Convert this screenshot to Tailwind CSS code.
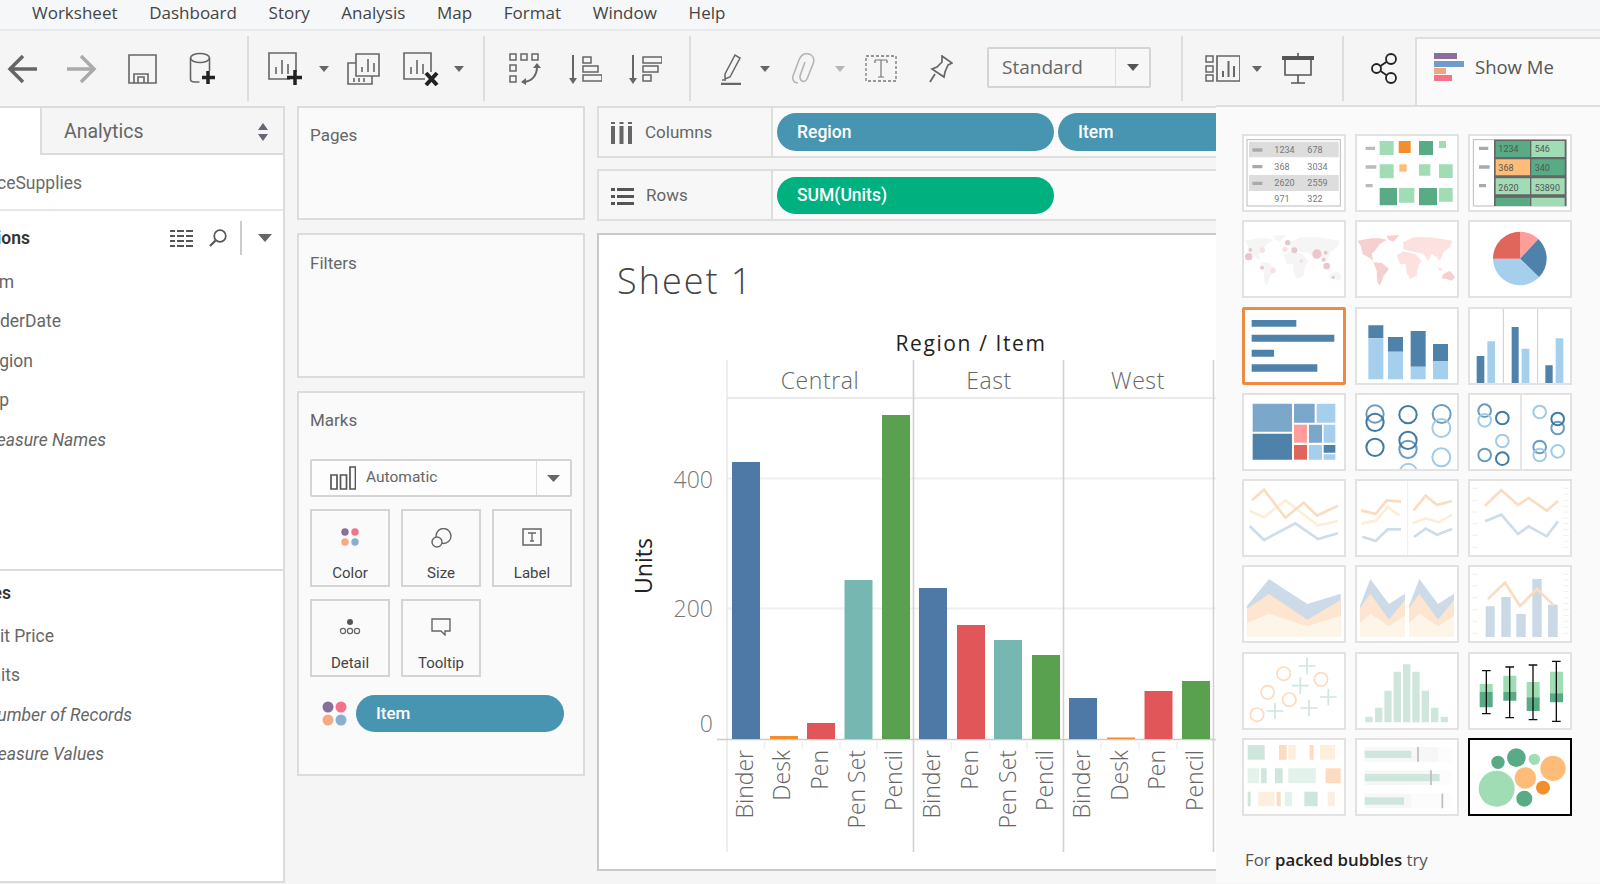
<!DOCTYPE html>
<html lang="en">
<head>
  <meta charset="UTF-8">
  <title>Tableau - Sheet 1</title>
  <script src="https://cdn.jsdelivr.net/npm/@tailwindcss/browser@4"></script>
</head>
<body class="h-[884px] w-[1600px] overflow-hidden bg-[#f5f5f5] font-['Roboto',sans-serif] text-[#555]">

  <!-- menu bar -->
  <div class="h-[31px] flex items-center pl-[32px] pb-[4px] gap-[31.700px] bg-[#f6f7f8] border-b-2 border-[#e8e9ea] font-['Open_Sans',sans-serif] text-[17px] text-[#444]">
    <span>Worksheet</span><span>Dashboard</span><span>Story</span><span>Analysis</span><span>Map</span><span>Format</span><span>Window</span><span>Help</span>
  </div>

  <!-- toolbar -->
  <div class="h-[75px] flex items-center bg-[#f5f5f5]">
    <svg class="ml-[7px]" width="31" height="30" viewBox="0 0 31 30" fill="none" stroke="#666" stroke-width="3.5"><path d="M30 15H4M16 2 3 15l13 13"/></svg>
    <svg class="ml-[28px]" width="32" height="30" viewBox="0 0 32 30" fill="none" stroke="#aaa" stroke-width="3.5"><path d="M1 15h26M15 2l13 13-13 13"/></svg>
    <svg class="ml-[30px]" width="29" height="30" viewBox="0 0 29 30" fill="none" stroke="#666" stroke-width="1.6"><path d="M1 1h27v28H1z"/><path d="M6 29V20h14v9M10 29v-6h6v6" /></svg>
    <svg class="ml-[32px]" width="26" height="33" viewBox="0 0 26 33" fill="none" stroke="#666" stroke-width="1.6"><ellipse cx="11" cy="6" rx="9.5" ry="4.5"/><path d="M1.5 6v21c0 2 2 3 4 3h5M20.500 6v13"/><path d="M19 19v13M13 25.500h13" stroke="#222" stroke-width="3.5"/></svg>
    <div class="ml-[32px] w-[2px] h-[65px] bg-[#ddd]"></div>

    <svg class="ml-[19px]" width="34" height="33" viewBox="0 0 34 33" fill="none" stroke="#666" stroke-width="1.6"><path d="M22 27H1V1h27v19"/><path d="M8 22v-7M14 22V8M20 22V12"/><path d="M27 18v15M19 25.500h15" stroke="#222" stroke-width="3.500"/></svg>
    <svg class="ml-[17px]" width="10" height="6" viewBox="0 0 10 6" fill="#666"><path d="M0 0h10L5 6z"/></svg>
    <svg class="ml-[18px]" width="33" height="32" viewBox="0 0 33 32" fill="none" stroke="#666" stroke-width="1.6"><path d="M9 1h23v22H9z"/><path d="M15 19v-5M21 19V6M27 19V10"/><path d="M9 10H1v21h24v-8"/><path d="M7 29v-4M12 29v-4M17 29v-4"/></svg>
    <svg class="ml-[23px]" width="36" height="34" viewBox="0 0 36 34" fill="none" stroke="#666" stroke-width="1.6"><path d="M22 27H1V1h27v19"/><path d="M8 22v-7M14 22V8M20 22V12"/><path d="M23 21l11 12M34 21 23 33" stroke="#222" stroke-width="4"/></svg>
    <svg class="ml-[15px]" width="10" height="6" viewBox="0 0 10 6" fill="#666"><path d="M0 0h10L5 6z"/></svg>
    <div class="ml-[19px] w-[2px] h-[65px] bg-[#ddd]"></div>

    <svg class="ml-[24px]" width="32" height="32" viewBox="0 0 32 32" fill="none" stroke="#666" stroke-width="1.500"><path d="M1 1h6v6H1zM12 1h6v6h-6zM23 1h6v6h-6zM1 12h6v6H1zM1 23h6v6H1z"/><path d="M14 29c8 0 14-6 14-15" stroke-width="2"/><path d="M24 15l4-5 4 5zM17 25l-5 4 5 3z" fill="#666" stroke="none"/></svg>
    <svg class="ml-[28px]" width="33" height="32" viewBox="0 0 33 32" fill="none" stroke="#666" stroke-width="1.500"><path d="M4 2v24" stroke-width="2"/><path d="M0 25h8l-4 6z" fill="#666" stroke="none"/><path d="M14 4h8v6h-8zM14 13h15v6H14zM14 22h19v6H14z"/></svg>
    <svg class="ml-[27px]" width="33" height="32" viewBox="0 0 33 32" fill="none" stroke="#666" stroke-width="1.500"><path d="M4 2v24" stroke-width="2"/><path d="M0 25h8l-4 6z" fill="#666" stroke="none"/><path d="M14 4h19v6H14zM14 13h15v6H14zM14 22h8v6h-8z"/></svg>
    <div class="ml-[27px] w-[2px] h-[65px] bg-[#ddd]"></div>

    <svg class="ml-[30px]" width="20" height="32" viewBox="0 0 20 32" fill="none" stroke="#666" stroke-width="1.500"><path d="M4 21 14 2l5 3L9 24l-5 2z"/><path d="M0 31h20" stroke-width="2.500"/><path d="M1 27h4" stroke-width="1.500"/></svg>
    <svg class="ml-[19px]" width="10" height="6" viewBox="0 0 10 6" fill="#666"><path d="M0 0h10L5 6z"/></svg>
    <svg class="ml-[21px]" width="25" height="32" viewBox="0 0 25 32" fill="none" stroke="#b5b5b5" stroke-width="1.600"><path d="M7 30c-4 0-6-3-5-7l6-16c2-5 6-7 10-6s6 5 4 10l-6 15c-1 2-3 3-5 2s-2-3-2-5l5-14"/></svg>
    <svg class="ml-[19px]" width="10" height="6" viewBox="0 0 10 6" fill="#b5b5b5"><path d="M0 0h10L5 6z"/></svg>
    <svg class="ml-[20px]" width="32" height="27" viewBox="0 0 32 27" fill="none" stroke="#777"><path d="M1 1h30v25H1z" stroke-dasharray="3 2" stroke-width="1.300"/><path d="M10 5h12M16 5v17M13 22h6M10 5v3M22 5v3" stroke-width="1.200"/></svg>
    <svg class="ml-[32px]" width="24" height="28" viewBox="0 0 24 28" fill="none" stroke="#666" stroke-width="1.700"><path d="M13 1l10 7-4 2-3 7-1 5-6-4-6-4 5-2 5-5z"/><path d="M6 19 1 27"/></svg>

    <div class="ml-[34px] mb-[3px] w-[164px] h-[41px] flex items-center border-2 border-[#d4d4d4] rounded-[2px] bg-[#f7f7f7]">
      <span class="flex-1 pl-[13px] text-[19px] font-['Open_Sans',sans-serif] text-[#666]">Standard</span>
      <div class="w-[34px] h-full flex items-center justify-center border-l border-[#ddd]">
        <svg width="12" height="7" viewBox="0 0 12 7" fill="#555"><path d="M0 0h12L6 7z"/></svg>
      </div>
    </div>
    <div class="ml-[30px] w-[2px] h-[65px] bg-[#ddd]"></div>

    <svg class="ml-[22px]" width="35" height="27" viewBox="0 0 35 27" fill="none" stroke="#666" stroke-width="1.500"><path d="M1 1h7v6H1zM1 11h7v6H1zM1 20h7v6H1z"/><path d="M12 1h23v25H12z" stroke-width="1.700"/><path d="M18 22v-6M23.500 22V6M29 22V11" stroke-width="2"/></svg>
    <svg class="ml-[12px]" width="10" height="6" viewBox="0 0 10 6" fill="#666"><path d="M0 0h10L5 6z"/></svg>
    <svg class="ml-[20px]" width="32" height="31" viewBox="0 0 32 31" fill="none" stroke="#555" stroke-width="1.600"><path d="M16 0v4"/><path d="M0 3h32v4H0z" fill="#555" stroke="none"/><path d="M3 7v15h26V7M16 22v8M9 30h14"/></svg>
    <div class="ml-[28px] w-[2px] h-[65px] bg-[#ddd]"></div>

    <svg class="ml-[27px]" width="26" height="31" viewBox="0 0 26 31" fill="none" stroke="#222" stroke-width="1.800"><circle cx="5.500" cy="15.500" r="4.500"/><circle cx="20" cy="6" r="5"/><circle cx="20" cy="25" r="5"/><path d="M9.500 13 16 8.500M9.500 18 16 22.500"/></svg>

    <div class="ml-[18px] flex-1 h-[69px] self-end flex items-center gap-[11px] pl-[17px] pb-[11px] bg-[#fafafa] border-t-2 border-l-2 border-[#dedede]">
      <svg width="30" height="28" viewBox="0 0 30 28"><path fill="#8a6f9c" d="M0 0h23v6H0z"/><path fill="#6f9ccb" d="M0 8h30v6H0z"/><path fill="#f2a679" d="M0 15h12v6H0z"/><path fill="#f4738a" d="M0 22h18v6H0z"/></svg>
      <span class="text-[18.500px] font-['Open_Sans',sans-serif] text-[#555]">Show Me</span>
    </div>
  </div>

  <!-- main -->
  <div class="h-[778px] flex">

    <!-- data pane -->
    <div class="w-[285px] h-[777px] shrink-0 bg-white border-r-2 border-b-2 border-[#dcdcdc] overflow-hidden text-[17.500px] text-[#666]">
      <div class="h-[49px] flex">
        <div class="w-[40px] border-t-2 border-[#dcdcdc]"></div>
        <div class="flex-1 flex items-center justify-between pl-[22px] pt-[2px] pr-[14px] bg-[#f5f5f5] border-2 border-r-0 border-[#dcdcdc] text-[19.500px]">
          <span>Analytics</span>
          <svg width="12" height="18" viewBox="0 0 12 18" fill="#667"><path d="M6 0l5 7H1zM6 18l-5-7h10z"/></svg>
        </div>
      </div>
      <div class="h-[56px] pt-[2px] flex items-center border-b-2 border-[#e6e6e6]">
        <div class="w-[82px] flex justify-end whitespace-nowrap text-[#6b6b6b]">OfficeSupplies</div>
      </div>
      <div class="h-[360px] border-b-2 border-[#dcdcdc] flex flex-col">
        <div class="h-[51px] pt-[3px] flex items-center text-[#333]">
          <div class="w-[30px] flex justify-end whitespace-nowrap font-semibold">Dimensions</div>
          <svg class="ml-[140px]" width="23" height="17" viewBox="0 0 23 17" fill="none" stroke="#555" stroke-width="2"><path d="M0 1h5M7 1h7M16 1h7M0 6h5M7 6h7M16 6h7M0 11h5M7 11h7M16 11h7M0 16h5M7 16h7M16 16h7"/></svg>
          <svg class="ml-[16px]" width="18" height="18" viewBox="0 0 18 18" fill="none" stroke="#555" stroke-width="1.700"><circle cx="11" cy="7" r="5.800"/><path d="M6.500 11.500 1 17" stroke-width="2.200"/></svg>
          <div class="ml-[13px] w-[1.500px] h-[34px] bg-[#ccc]"></div>
          <svg class="ml-[16px]" width="14" height="8" viewBox="0 0 14 8" fill="#666"><path d="M0 0h14L7 8z"/></svg>
        </div>
        <div class="h-[39.500px] flex items-center"><div class="w-[14px] flex justify-end whitespace-nowrap">Item</div></div>
        <div class="h-[39.500px] flex items-center"><div class="w-[61px] flex justify-end whitespace-nowrap">OrderDate</div></div>
        <div class="h-[39.500px] flex items-center"><div class="w-[33px] flex justify-end whitespace-nowrap">Region</div></div>
        <div class="h-[39.500px] flex items-center"><div class="w-[9px] flex justify-end whitespace-nowrap">Rep</div></div>
        <div class="h-[39.500px] flex items-center italic"><div class="w-[106px] flex justify-end whitespace-nowrap">Measure Names</div></div>
      </div>
      <div class="h-[45px] flex items-center text-[#333]">
        <div class="w-[11px] flex justify-end whitespace-nowrap font-semibold">Measures</div>
      </div>
      <div class="h-[39.500px] flex items-center"><div class="w-[54px] flex justify-end whitespace-nowrap">Unit Price</div></div>
      <div class="h-[39.500px] flex items-center"><div class="w-[20px] flex justify-end whitespace-nowrap">Units</div></div>
      <div class="h-[39.500px] flex items-center italic"><div class="w-[132px] flex justify-end whitespace-nowrap">Number of Records</div></div>
      <div class="h-[39.500px] flex items-center italic"><div class="w-[104px] flex justify-end whitespace-nowrap">Measure Values</div></div>
    </div>

    <!-- pages, filters, marks -->
    <div class="ml-[12px] w-[288px] shrink-0 flex flex-col gap-[13px] text-[#666] text-[17px]">
      <div class="h-[114px] px-[11px] pt-[15px] bg-[#fafafa] border-2 border-[#dcdcdc]">Pages</div>
      <div class="h-[145px] px-[11px] pt-[16px] bg-[#fafafa] border-2 border-[#dcdcdc]">Filters</div>
      <div class="h-[385px] px-[11px] pt-[16px] bg-[#fafafa] border-2 border-[#dcdcdc]">
        <div class="leading-[22px]">Marks</div>
        <div class="mt-[28px] w-[262px] h-[38px] flex items-center border-2 border-[#d4d4d4] rounded-[2px] bg-white/60">
          <svg class="ml-[18px]" width="26" height="24" viewBox="0 0 26 24" fill="none" stroke="#555" stroke-width="1.700"><path d="M1 9h6v14H1zM10.500 9h6v14h-6zM20 1h5.500v22H20z"/></svg>
          <span class="ml-[10px] text-[15.500px]">Automatic</span>
          <div class="ml-auto w-[34px] h-full flex items-center justify-center border-l border-[#ddd]">
            <svg width="13" height="7" viewBox="0 0 13 7" fill="#666"><path d="M0 0h13L6.500 7z"/></svg>
          </div>
        </div>
        <div class="mt-[12px] grid grid-cols-[80px_80px_80px] gap-x-[11px] gap-y-[12px] text-[15px] text-[#444]">
          <div class="h-[78px] flex flex-col items-center border-2 border-[#d4d4d4]">
            <svg class="mt-[17px]" width="18" height="18" viewBox="0 0 18 18"><circle cx="4" cy="4" r="3.700" fill="#8a6f9c"/><circle cx="14" cy="4" r="3.700" fill="#f4738a"/><circle cx="4" cy="14" r="3.700" fill="#f4aa82"/><circle cx="14" cy="14" r="3.700" fill="#88aed2"/></svg>
            <span class="mt-[16px]">Color</span>
          </div>
          <div class="h-[78px] flex flex-col items-center border-2 border-[#d4d4d4]">
            <svg class="mt-[17px]" width="21" height="20" viewBox="0 0 21 20" fill="none" stroke="#666" stroke-width="1.400"><circle cx="12.500" cy="8" r="7.500"/><circle cx="6" cy="14" r="5" fill="#fafafa"/></svg>
            <span class="mt-[14px]">Size</span>
          </div>
          <div class="h-[78px] flex flex-col items-center border-2 border-[#d4d4d4]">
            <svg class="mt-[17px]" width="20" height="18" viewBox="0 0 20 18" fill="none" stroke="#666"><path d="M1 1h18v16H1z" stroke-width="1.500"/><path d="M6 5h8M10 5v8M8 13h4" stroke-width="1.300"/></svg>
            <span class="mt-[16px]">Label</span>
          </div>
          <div class="h-[78px] flex flex-col items-center border-2 border-[#d4d4d4]">
            <svg class="mt-[17px]" width="22" height="18" viewBox="0 0 22 18" fill="none" stroke="#666" stroke-width="1.200"><circle cx="11" cy="4" r="3" fill="#555" stroke="none"/><circle cx="4" cy="13" r="2.600"/><circle cx="11" cy="13" r="2.600"/><circle cx="18" cy="13" r="2.600"/></svg>
            <span class="mt-[16px]">Detail</span>
          </div>
          <div class="h-[78px] flex flex-col items-center border-2 border-[#d4d4d4]">
            <svg class="mt-[17px]" width="20" height="18" viewBox="0 0 20 18" fill="none" stroke="#666" stroke-width="1.400"><path d="M1 1h18v12h-5v4l-4-4H1z"/></svg>
            <span class="mt-[16px]">Tooltip</span>
          </div>
        </div>
        <div class="mt-[18px] flex items-center">
          <svg class="ml-[12px]" width="25" height="25" viewBox="0 0 25 25"><circle cx="6" cy="6" r="5.500" fill="#8a6f9c"/><circle cx="19" cy="6" r="5.500" fill="#f4738a"/><circle cx="6" cy="19" r="5.500" fill="#f4aa82"/><circle cx="19" cy="19" r="5.500" fill="#88aed2"/></svg>
          <div class="ml-[9px] w-[208px] h-[37px] flex items-center pl-[20px] rounded-full bg-[#4895b2] text-white text-[17px] font-medium">Item</div>
        </div>
      </div>
    </div>

    <!-- shelves and view -->
    <div class="ml-[12px] w-[619px] shrink-0 overflow-hidden flex flex-col">
      <div class="h-[52px] shrink-0 flex w-[800px] border-2 border-[#dedede] bg-[#fafafa]">
        <div class="w-[174px] shrink-0 h-full flex items-center pl-[12px] pt-[2px] border-r-2 border-[#dedede] bg-[#f7f7f7] text-[17px] text-[#666]">
          <svg width="21" height="22" viewBox="0 0 21 22" fill="#666"><path d="M0 4h4v18H0zM8.500 4h4v18h-4zM17 4h4v18h-4zM0 0h4v2H0zM8.500 0h4v2h-4zM17 0h4v2h-4z"/></svg>
          <span class="ml-[13px]">Columns</span>
        </div>
        <div class="ml-[4px] mt-[5px] w-[277px] h-[38px] shrink-0 flex items-center pl-[20px] rounded-full bg-[#4895b2] text-white text-[17.500px] font-medium">Region</div>
        <div class="ml-[4px] mt-[5px] w-[277px] h-[38px] shrink-0 flex items-center pl-[20px] rounded-full bg-[#4895b2] text-white text-[17.500px] font-medium">Item</div>
      </div>
      <div class="mt-[11px] h-[52px] shrink-0 flex w-[800px] border-2 border-[#dedede] bg-[#fafafa]">
        <div class="w-[174px] shrink-0 h-full flex items-center pl-[12px] pt-[2px] border-r-2 border-[#dedede] bg-[#f7f7f7] text-[17px] text-[#666]">
          <svg width="23" height="17" viewBox="0 0 23 17" fill="#555"><path d="M0 0h4v3H0zM6 0h17v3H6zM0 7h4v3H0zM6 7h17v3H6zM0 14h4v3H0zM6 14h17v3H6z"/></svg>
          <span class="ml-[12px]">Rows</span>
        </div>
        <div class="ml-[4px] mt-[6px] w-[277px] h-[37px] shrink-0 flex items-center pl-[20px] rounded-full bg-[#00b180] text-white text-[17.500px] font-medium">SUM(Units)</div>
      </div>
      <div class="mt-[12px] w-[640px] h-[638px] shrink-0 bg-white border-2 border-[#c8c8c8]">
        <div class="h-[85px] pl-[18px] pt-[22px] text-[36px] tracking-[2px] leading-[48px] font-light font-['Open_Sans',sans-serif] text-[#444]">Sheet 1</div>
        <svg width="617" height="548" viewBox="599 320 617 548" class="font-['Open_Sans',sans-serif]">
          <!-- gridlines -->
          <path d="M727 478.500H1216M727 608.500H1216" stroke="#f0f0f0" stroke-width="2"/>
          <path d="M727 398H1216" stroke="#e4e4e4" stroke-width="1.500"/>
          <path d="M727 360V852" stroke="#ddd" stroke-width="1"/>
          <path d="M913.500 360V852M1063.500 360V852M1213.500 360V852" stroke="#d2d2d2" stroke-width="1.600"/>
          <path d="M717 739.500H1216" stroke="#ccc" stroke-width="1.500"/>
          <path d="M764.500 742v7M802.500 742v7M840 742v7M877 742v7M951.500 742v7M989.500 742v7M1027 742v7M1101 742v7M1139 742v7M1177 742v7" stroke="#eee" stroke-width="1.500"/>
          <!-- central -->
          <rect x="732" y="462" width="28" height="277" fill="#4e79a7"/>
          <rect x="770" y="736" width="28" height="3" fill="#f28e2b"/>
          <rect x="807" y="723" width="28" height="16" fill="#e15759"/>
          <rect x="844.500" y="580" width="28" height="159" fill="#76b7b2"/>
          <rect x="882" y="415" width="28" height="324" fill="#59a14f"/>
          <!-- east -->
          <rect x="919" y="588" width="28" height="151" fill="#4e79a7"/>
          <rect x="957" y="625" width="28" height="114" fill="#e15759"/>
          <rect x="994" y="640" width="28" height="99" fill="#76b7b2"/>
          <rect x="1032" y="655" width="28" height="84" fill="#59a14f"/>
          <!-- west -->
          <rect x="1069" y="698" width="28" height="41" fill="#4e79a7"/>
          <rect x="1107" y="737.500" width="28" height="1.500" fill="#f28e2b"/>
          <rect x="1144.500" y="691" width="28" height="48" fill="#e15759"/>
          <rect x="1182" y="681" width="28" height="58" fill="#59a14f"/>
          <!-- headers -->
          <text x="971" y="351" text-anchor="middle" font-size="21" letter-spacing="1.600" fill="#222">Region / Item</text>
          <g font-size="23" letter-spacing="0.600" font-weight="300" fill="#666" text-anchor="middle">
            <text x="820" y="389">Central</text>
            <text x="989" y="389">East</text>
            <text x="1138" y="389">West</text>
          </g>
          <g font-size="23" font-weight="300" fill="#777" text-anchor="end">
            <text x="713" y="488">400</text>
            <text x="713" y="617">200</text>
            <text x="713" y="732">0</text>
          </g>
          <text transform="translate(652 566) rotate(-90)" text-anchor="middle" font-size="23" fill="#222">Units</text>
          <g font-size="23" font-weight="300" fill="#666" text-anchor="end">
            <text transform="translate(753 750) rotate(-90)">Binder</text>
            <text transform="translate(790 750) rotate(-90)">Desk</text>
            <text transform="translate(828 750) rotate(-90)">Pen</text>
            <text transform="translate(865 750) rotate(-90)">Pen Set</text>
            <text transform="translate(902 750) rotate(-90)">Pencil</text>
            <text transform="translate(940 750) rotate(-90)">Binder</text>
            <text transform="translate(978 750) rotate(-90)">Pen</text>
            <text transform="translate(1016 750) rotate(-90)">Pen Set</text>
            <text transform="translate(1053 750) rotate(-90)">Pencil</text>
            <text transform="translate(1090 750) rotate(-90)">Binder</text>
            <text transform="translate(1128 750) rotate(-90)">Desk</text>
            <text transform="translate(1165 750) rotate(-90)">Pen</text>
            <text transform="translate(1203 750) rotate(-90)">Pencil</text>
          </g>
        </svg>
      </div>
    </div>

    <!-- show me -->
    <div class="w-[384px] h-[778px] shrink-0 bg-[#fafafa] border-t-2 border-[#dedede] pl-[26px] pt-[27px] -mt-[1px]">
      <div class="grid grid-cols-[104px_104px_104px] auto-rows-[78px] gap-x-[9px] gap-y-[8.300px]">

        <!-- text table -->
        <div class="bg-white border-2 border-[#e2e2e2]"><svg class="w-full h-full" viewBox="6 6 300 222">
          <rect x="15" y="17" width="280" height="199" fill="none" stroke="#bbb" stroke-width="3"/>
          <path fill="#ddd" d="M21 23h269v47H21zM21 123h269v48H21z"/>
          <path stroke="#aaa" stroke-width="10" d="M31 48h30M31 98h30M31 148h30"/>
          <g font-size="27" fill="#777"><text x="97" y="57">1234</text><text x="196" y="57">678</text><text x="97" y="107">368</text><text x="196" y="107">3034</text><text x="97" y="157">2620</text><text x="196" y="157">2559</text><text x="97" y="203">971</text><text x="196" y="203">322</text></g>
        </svg></div>
        <!-- highlight table -->
        <div class="bg-white border-2 border-[#e2e2e2]"><svg class="w-full h-full" viewBox="6 6 300 222">
          <path stroke="#bbb" stroke-width="10" d="M32 43h28M32 99h32M32 155h21"/>
          <path fill="#a0dcb4" d="M74 21h42v42H74zM252 21h21v21h-21zM74 91h42v42H74zM192 91h34v34h-34zM252 91h41v41h-41zM132 162h46v44h-46zM252 162h41v41h-41z"/>
          <path fill="#f28e2b" d="M131 21h36v36h-36z"/>
          <path fill="#ffbc79" d="M133 91h22v22h-22z"/>
          <path fill="#59ab86" d="M192 21h42v42h-42zM74 162h52v52H74zM192 162h54v52h-54z"/>
        </svg></div>
        <!-- heat map -->
        <div class="bg-white border-2 border-[#e2e2e2]"><svg class="w-full h-full" viewBox="6 6 300 222">
          <rect x="16" y="17" width="279" height="199" fill="none" stroke="#bbb" stroke-width="3"/>
          <rect x="78" y="17" width="217" height="199" fill="#666"/>
          <path fill="#59ab86" d="M83 21h103v48H83zM190 76h100v48H190zM83 191h103v25H83z"/>
          <path fill="#a0dcb4" d="M190 21h100v48H190zM83 133h103v48H83zM190 133h100v48H190zM190 191h100v25H190z"/>
          <path fill="#ffbc79" d="M83 76h103v48H83z"/>
          <path stroke="#aaa" stroke-width="10" d="M33 43h28M33 99h32M33 155h21"/>
          <g font-size="27" fill="#555"><text x="91" y="53">1234</text><text x="200" y="53">546</text><text x="91" y="112">368</text><text x="200" y="112">340</text><text x="91" y="170">2620</text><text x="200" y="170">53890</text></g>
        </svg></div>

        <!-- symbol map -->
        <div class="bg-white border-2 border-[#e2e2e2]"><svg class="w-full h-full" viewBox="6 6 300 222">
          <path fill="#f5f5f5" d="M8 62 50 55 75 55 95 59 75 72 60 92 50 102 55 122 40 112 23 102 17 77zM95 47 133 45 115 65 100 59zM55 127 80 129 102 147 85 169 75 197 67 187 65 152zM145 67 175 52 225 52 293 62 285 82 265 97 255 122 245 112 230 102 220 122 205 102 185 97 160 92 145 87zM125 105 145 94 180 102 200 122 190 137 185 167 165 177 155 157 152 132 135 132zM260 175 265 162 285 152 300 172 290 182 275 177zM245 142 265 147 255 152z"/>
          <g fill="#ebc5cc"><circle cx="20" cy="110" r="11"/><circle cx="25" cy="90" r="6"/><circle cx="60" cy="143" r="6"/><circle cx="137" cy="68" r="8"/><circle cx="157" cy="91" r="9"/><circle cx="225" cy="102" r="14"/><circle cx="251" cy="98" r="6"/><circle cx="245" cy="119" r="6"/><circle cx="254" cy="138" r="10"/><circle cx="274" cy="172" r="5"/></g>
          <g fill="#fbe0e0"><circle cx="61" cy="90" r="8"/><circle cx="93" cy="152" r="8"/><circle cx="129" cy="88" r="8"/><circle cx="178" cy="123" r="6"/></g>
        </svg></div>
        <!-- filled map -->
        <div class="bg-white border-2 border-[#e2e2e2]"><svg class="w-full h-full" viewBox="6 6 300 222">
          <path fill="#f6cfcf" d="M8 62 50 55 75 55 95 59 75 72 60 92 50 102 55 122 40 112 23 102 17 77zM95 47 133 45 115 65 100 59zM55 127 80 129 102 147 85 169 75 197 67 187 65 152zM260 175 265 162 285 152 300 172 290 182 275 177z"/>
          <path fill="#fde0e0" d="M145 67 175 52 225 52 293 62 285 82 265 97 255 122 245 112 230 102 220 122 205 102 185 97 160 92 145 87zM125 105 145 94 180 102 200 122 190 137 185 167 165 177 155 157 152 132 135 132zM245 142 265 147 255 152z"/>
        </svg></div>
        <!-- pie -->
        <div class="bg-white border-2 border-[#e2e2e2]"><svg class="w-full h-full" viewBox="6 6 300 222">
          <path fill="#ff9d9a" d="M156 116V35a81 81 0 0 1 55 22z"/>
          <path fill="#4f82ab" d="M156 116 211 57a81 81 0 0 1 2 115z"/>
          <path fill="#a6cfee" d="M156 116 213 172A81 81 0 0 1 75 116z"/>
          <path fill="#e0655a" d="M156 116H75a81 81 0 0 1 81-81z"/>
        </svg></div>

        <!-- horizontal bars -->
        <div class="bg-white border-[3px] border-[#ed8a43] rounded-[2px]"><svg class="w-full h-full" viewBox="9 9 294 216">
          <path fill="#4f82ab" d="M29 39h134v20H29zM29 83h248v21H29zM29 128h67v21H29zM29 172h197v22H29z"/>
        </svg></div>
        <!-- stacked bars -->
        <div class="bg-white border-2 border-[#e2e2e2]"><svg class="w-full h-full" viewBox="6 6 300 222">
          <path fill="#4f82ab" d="M40 55h45v39H40zM99 90h45v44H99zM167 72h45v107h-45zM234 111h45v51h-45z"/>
          <path fill="#a6cfee" d="M40 94h45v123H40zM99 134h45v83H99zM167 179h45v38h-45zM234 162h45v55h-45z"/>
        </svg></div>
        <!-- side by side -->
        <div class="bg-white border-2 border-[#e2e2e2]"><svg class="w-full h-full" viewBox="6 6 300 222">
          <path stroke="#ccc" stroke-width="3" d="M106 0v234M209 0v234"/>
          <path fill="#4f82ab" d="M26 147h23v82H26zM131 60h21v169h-21zM232 175h22v54h-22z"/>
          <path fill="#a6cfee" d="M58 103h23v126H58zM161 125h23v104h-23zM263 94h23v135h-23z"/>
        </svg></div>

        <!-- treemap -->
        <div class="bg-white border-2 border-[#e2e2e2]"><svg class="w-full h-full" viewBox="6 6 300 222">
          <path fill="#7ba7cb" d="M32 32h118v84H32zM156 32h62v57h-62zM201 95h39v54h-39z"/>
          <path fill="#4f82ab" d="M32 122h118v78H32zM245 156h35v23h-35z"/>
          <path fill="#a6cfee" d="M224 32h56v57h-56zM245 95h35v54h-35zM201 156h39v44h-39zM245 184h35v16h-35z"/>
          <path fill="#ff9d9a" d="M156 95h39v54h-39z"/>
          <path fill="#e0655a" d="M156 156h39v44h-39z"/>
        </svg></div>
        <!-- circle views -->
        <div class="bg-white border-2 border-[#e2e2e2]"><svg class="w-full h-full" viewBox="6 6 300 222" fill="none" stroke-width="6">
          <g stroke="#6a9bc0"><circle cx="60" cy="63" r="26"/><circle cx="260" cy="63" r="27"/><circle cx="159" cy="169" r="26"/></g>
          <g stroke="#3f7ba5"><circle cx="60" cy="88" r="26"/><circle cx="159" cy="65" r="26"/><circle cx="60" cy="163" r="26"/><circle cx="159" cy="142" r="26"/></g>
          <g stroke="#a0cbe8"><circle cx="259" cy="105" r="27"/><circle cx="259" cy="193" r="27"/><circle cx="160" cy="237" r="25"/></g>
        </svg></div>
        <!-- side by side circles -->
        <div class="bg-white border-2 border-[#e2e2e2]"><svg class="w-full h-full" viewBox="6 6 300 222" fill="none" stroke-width="6">
          <path stroke="#ccc" stroke-width="3" d="M159 0v234"/>
          <g stroke="#6a9bc0"><circle cx="50" cy="53" r="19"/><circle cx="50" cy="186" r="19"/><circle cx="269" cy="105" r="19"/><circle cx="215" cy="162" r="19"/></g>
          <g stroke="#a0cbe8"><circle cx="50" cy="82" r="19"/><circle cx="103" cy="144" r="19"/><circle cx="215" cy="57" r="19"/><circle cx="215" cy="186" r="19"/><circle cx="269" cy="175" r="19"/></g>
          <g stroke="#3f7ba5"><circle cx="103" cy="75" r="19"/><circle cx="103" cy="197" r="19"/><circle cx="269" cy="78" r="19"/></g>
        </svg></div>

        <!-- lines -->
        <div class="bg-white border-2 border-[#e2e2e2]"><svg class="w-full h-full" viewBox="6 6 300 222" fill="none" stroke-width="8">
          <path stroke="#fdeed5" d="M23 96l43 19 64-51 98 76 59-14"/>
          <path stroke="#fbdcc0" d="M30 64l36-32 64 84 55-45 40 39 63-30"/>
          <path stroke="#cfdde9" d="M23 141l43 42 94-50 68 47 60-17"/>
        </svg></div>
        <!-- lines side by side -->
        <div class="bg-white border-2 border-[#e2e2e2]"><svg class="w-full h-full" viewBox="6 6 300 222" fill="none" stroke-width="8">
          <path stroke="#eee" stroke-width="3" d="M158 0v234"/>
          <path stroke="#fbdcc0" d="M19 94l43 11 33-41 43 4M176 94l36-44 34 28 45-12"/>
          <path stroke="#fdeed5" d="M19 134l43-9 36-41 36 26M173 133l39-15 40 12 39-23"/>
          <path stroke="#cfdde9" d="M22 173l40 13 36-35h40M177 174l35-25 34 18 45-17"/>
        </svg></div>
        <!-- dual lines -->
        <div class="bg-white border-2 border-[#e2e2e2]"><svg class="w-full h-full" viewBox="6 6 300 222" fill="none" stroke-width="8">
          <path stroke="#eee" stroke-width="3" d="M13 28h16M13 65h16M13 99h16M13 134h16M13 169h16M13 205h16M286 28h16M286 45h16M286 65h16M286 82h16M286 99h16M286 117h16M286 134h16M286 151h16M286 169h16M286 187h16M286 205h16"/>
          <path stroke="#fbdcc0" d="M51 80l49-47 50 45 32-21 54 38 34-29"/>
          <path stroke="#cfdde9" d="M51 127l49-20 50 58 32-23 54 30 34-45"/>
        </svg></div>

        <!-- area -->
        <div class="bg-white border-2 border-[#e2e2e2]"><svg class="w-full h-full" viewBox="6 6 300 222">
          <path fill="#cddbe8" d="M15 122l66-80 115 75 100-31v130H15z"/>
          <path fill="#fde5cf" d="M15 132l66-45 115 77 100-59v111H15z"/>
          <path fill="#fef5e9" d="M15 174l66-28 115 38 100-32v64H15z"/>
        </svg></div>
        <!-- area side by side -->
        <div class="bg-white border-2 border-[#e2e2e2]"><svg class="w-full h-full" viewBox="6 6 300 222">
          <path fill="#cddbe8" d="M15 122l31-80 56 75 48-31v130H15zM162 122l31-80 56 75 48-31v130H162z"/>
          <path fill="#fde5cf" d="M15 129l31-43 56 78 48-59v111H15zM162 129l31-43 56 78 48-59v111H162z"/>
          <path fill="#fef5e9" d="M15 174l31-28 56 38 48-32v64H15zM162 174l31-28 56 38 48-32v64H162z"/>
        </svg></div>
        <!-- dual combo -->
        <div class="bg-white border-2 border-[#e2e2e2]"><svg class="w-full h-full" viewBox="6 6 300 222" fill="none">
          <path stroke="#eee" stroke-width="3" d="M13 28h16M13 63h16M13 98h16M13 134h16M13 169h16M13 205h16M286 28h16M286 45h16M286 63h16M286 80h16M286 98h16M286 116h16M286 134h16M286 151h16M286 169h16M286 187h16M286 205h16"/>
          <path fill="#cbd9e6" d="M53 124h27v92H53zM100 96h28v120h-28zM145 147h28v69h-28zM193 42h28v174h-28zM240 119h29v97h-29z"/>
          <path stroke="#fbdcc0" stroke-width="8" d="M60 102l51-49 45 70 51-51 51 50"/>
        </svg></div>

        <!-- scatter -->
        <div class="bg-white border-2 border-[#e2e2e2]"><svg class="w-full h-full" viewBox="6 6 300 222" fill="none" stroke-width="5">
          <g stroke="#fbdcc0"><circle cx="125" cy="65" r="20"/><circle cx="77" cy="121" r="20"/><circle cx="237" cy="82" r="20"/><circle cx="142" cy="143" r="20"/><circle cx="45" cy="188" r="20"/></g>
          <path stroke="#cfe6dd" d="M195 17v50M170 42h50M175 76v50M150 101h50M259 110v50M234 135h50M201 143v50M176 168h50M99 152v50M74 177h50"/>
        </svg></div>
        <!-- histogram -->
        <div class="bg-white border-2 border-[#e2e2e2]"><svg class="w-full h-full" viewBox="6 6 300 222">
          <path fill="#cfe6dd" d="M31 194h22v17H31zM60 167h22v44H60zM88 116h22v95H88zM116 59h22v152h-22zM144 37h22v174h-22zM172 59h22v152h-22zM200 116h22v95h-22zM228 167h22v44h-22zM257 194h22v17h-22z"/>
        </svg></div>
        <!-- box plot -->
        <div class="bg-white border-2 border-[#e2e2e2]"><svg class="w-full h-full" viewBox="6 6 300 222" fill="none">
          <path fill="#a0dcb4" d="M35 96h39v23H35zM106 71h39v48h-39zM176 90h39v46h-39zM246 59h39v65h-39z"/>
          <path fill="#59ab86" d="M35 119h39v47H35zM106 119h39v27h-39zM176 136h39v41h-39zM246 124h39v27h-39z"/>
          <path stroke="#111" stroke-width="4" d="M55 56v129M42 56h26M42 185h26M125 45v152M112 45h26M112 197h26M195 39v164M182 39h26M182 203h26M265 28v180M252 28h26M252 208h26"/>
        </svg></div>

        <!-- gantt -->
        <div class="bg-white border-2 border-[#e2e2e2]"><svg class="w-full h-full" viewBox="6 6 300 222">
          <path fill="#cfe6dd" d="M17 21h51v44H17zM57 91h17v45H57zM99 91h23v45H99zM17 161h9v44h-9zM187 161h40v44h-40z"/>
          <path fill="#e3f2ea" d="M17 91h34v45H17zM139 91h82v45h-82zM128 161h22v44h-22z"/>
          <path fill="#fbdcc0" d="M111 21h23v44h-23zM203 21h12v44h-12zM251 91h45v45h-45zM104 161h12v44h-12z"/>
          <path fill="#fdeedd" d="M139 21h22v44h-22zM234 21h45v44h-45zM49 161h48v44H49zM257 161h22v44h-22z"/>
        </svg></div>
        <!-- bullet -->
        <div class="bg-white border-2 border-[#e2e2e2]"><svg class="w-full h-full" viewBox="6 6 300 222">
          <path fill="#f7f7f7" d="M29 27h221v44H29zM29 97h200v44H29zM29 167h141v44H29z"/>
          <path fill="#fcfcfc" d="M250 27h40v44h-40zM229 97h61v44h-61zM170 167h120v44H170z"/>
          <path fill="#cfe6dd" d="M29 38h140v22H29zM29 108h225v22H29zM29 178h118v22H29z"/>
          <path stroke="#bbb" stroke-width="5" d="M189 27v44M228 97v44M262 167v44"/>
        </svg></div>
        <!-- packed bubbles -->
        <div class="bg-white border-2 border-black"><svg class="w-full h-full" viewBox="6 6 300 222">
          <circle cx="86" cy="152" r="54" fill="#a0dcb4"/><circle cx="90" cy="73" r="20" fill="#59ab86"/><circle cx="145" cy="59" r="28" fill="#59ab86"/><circle cx="199" cy="64" r="17" fill="#a0dcb4"/><circle cx="255" cy="91" r="38" fill="#ffbc79"/><circle cx="172" cy="120" r="32" fill="#ffbc79"/><circle cx="225" cy="149" r="21" fill="#f28e2b"/><circle cx="169" cy="182" r="24" fill="#59ab86"/>
        </svg></div>
      </div>
      <p class="mt-[31px] ml-[3px] text-[16.800px] font-['Open_Sans',sans-serif] text-[#555]">For <span class="font-semibold text-[#222]">packed bubbles</span> try</p>
    </div>
  </div>
</body>
</html>
